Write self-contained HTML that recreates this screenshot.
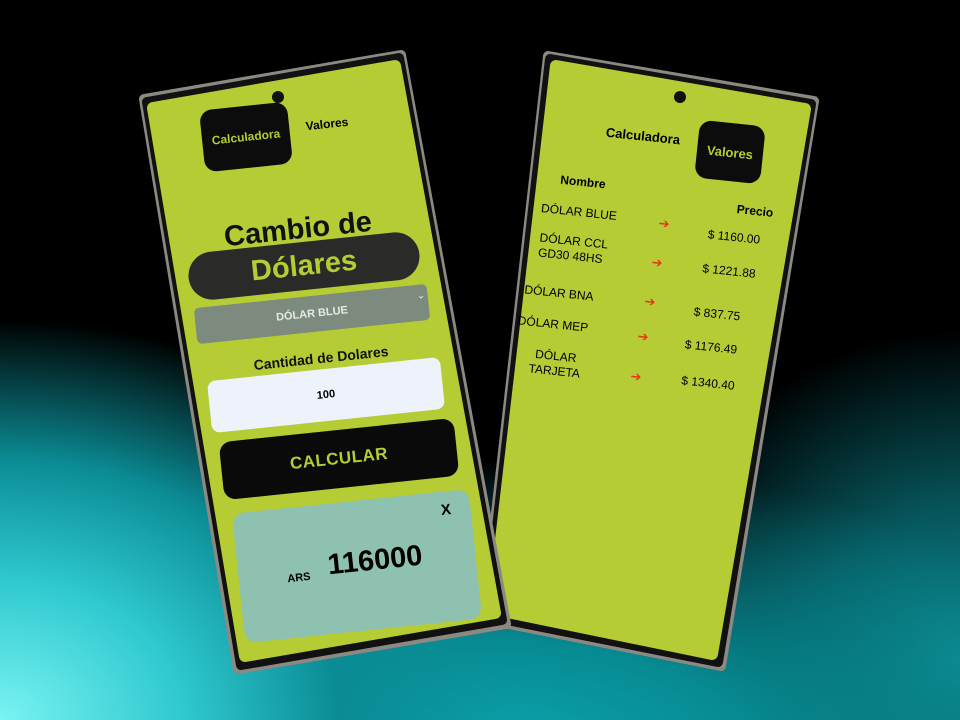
<!DOCTYPE html>
<html><head><meta charset="utf-8"><style>
body{margin:0;width:960px;height:720px;overflow:hidden;position:relative;font-family:"Liberation Sans",sans-serif;
background:
radial-gradient(ellipse 520px 400px at 0px 720px,#7af3f3 0%,#2fc9cf 35%,#0b8c95 65%,rgba(0,40,45,0) 100%),
radial-gradient(ellipse 700px 300px at 480px 760px,#0ca8b0 0%,#078a92 40%,rgba(0,30,35,0) 100%),
radial-gradient(ellipse 330px 330px at 960px 660px,#0d8a90 0%,#06565c 45%,rgba(0,0,0,0) 100%),
#000;}
.e{position:absolute;transform:translate(-50%,-50%) rotate(var(--r));white-space:nowrap;text-align:center;display:flex;align-items:center;justify-content:center}
.L{--r:-6deg}.R{--r:6deg}
svg{position:absolute;left:0;top:0}
</style></head><body>
<svg width="960" height="720">
<polygon points="548,56 814,101 721,666 484,619" fill="#8d8882" stroke="#8d8882" stroke-width="10" stroke-linejoin="round"/>
<polygon points="550,59 811,104 718,662 487,616" fill="#111" stroke="#111" stroke-width="10" stroke-linejoin="round"/>
<polygon points="556,66 805,109 712,654 493,609" fill="#b5cc34" stroke="#b5cc34" stroke-width="12" stroke-linejoin="round"/>
<polygon points="144,99 401,55 506,624 238,669" fill="#8d8882" stroke="#8d8882" stroke-width="10" stroke-linejoin="round"/>
<polygon points="147,102 399,58 502,620 241,665" fill="#111" stroke="#111" stroke-width="10" stroke-linejoin="round"/>
<polygon points="153,108 395,66 495,613 245,656" fill="#b5cc34" stroke="#b5cc34" stroke-width="12" stroke-linejoin="round"/>
<circle cx="278" cy="97" r="6" fill="#111"/>
<circle cx="680" cy="97" r="6" fill="#111"/>
</svg>
<!-- left phone -->
<div class="e L" style="left:246px;top:137px;width:88px;height:62px;background:#0c0c0c;border-radius:12px;color:#b5cc34;font-weight:bold;font-size:12px">Calculadora</div>
<div class="e L" style="left:327px;top:124px;font-weight:bold;font-size:12px">Valores</div>
<div class="e L" style="left:298px;top:230px;font-weight:bold;font-size:29px;color:#111">Cambio de</div>
<div class="e L" style="left:304px;top:266px;width:232px;height:48px;background:#2a2a28;border-radius:24px;color:#b5cc34;font-weight:bold;font-size:29px">Dólares</div>
<div class="e L" style="left:312px;top:314px;width:234px;height:36px;background:#7d8a7e;border-radius:5px;color:#e6eae6;font-size:11px;font-weight:bold">DÓLAR BLUE</div>
<div class="e L" style="left:421px;top:296px;color:#e6eae6;font-size:10px">⌄</div>
<div class="e L" style="left:321px;top:358px;font-weight:bold;font-size:14px;color:#111">Cantidad de Dolares</div>
<div class="e L" style="left:326px;top:395px;width:234px;height:52px;background:#eef2fb;border-radius:8px;font-size:11px;font-weight:bold">100</div>
<div class="e L" style="left:339px;top:459px;width:236px;height:58px;background:#0a0a0a;border-radius:12px;color:#b5cc34;font-weight:900;font-size:17px;letter-spacing:0.5px">CALCULAR</div>
<div class="e L" style="left:357px;top:566px;width:238px;height:130px;background:#8fc1b0;border-radius:12px"></div>
<div class="e L" style="left:446px;top:510px;font-weight:bold;font-size:15px">X</div>
<div class="e L" style="left:299px;top:578px;font-weight:bold;font-size:11px">ARS</div>
<div class="e L" style="left:375px;top:561px;font-weight:bold;font-size:29px">116000</div>
<!-- right phone -->
<div class="e R" style="left:643px;top:136px;font-weight:bold;font-size:13px">Calculadora</div>
<div class="e R" style="left:730px;top:152px;width:66px;height:58px;background:#0c0c0c;border-radius:12px;color:#b5cc34;font-weight:bold;font-size:13px">Valores</div>
<div class="e R" style="left:583px;top:182px;font-weight:bold;font-size:12px">Nombre</div>
<div class="e R" style="left:755px;top:211px;font-weight:bold;font-size:12px">Precio</div>
<div class="e R" style="left:579px;top:212px;font-size:12px">DÓLAR BLUE</div>
<div class="e R" style="left:573px;top:249px;font-size:12px;line-height:15px;text-align:left;display:block">DÓLAR CCL<br>GD30 48HS</div>
<div class="e R" style="left:559px;top:293px;font-size:12px">DÓLAR BNA</div>
<div class="e R" style="left:553px;top:324px;font-size:12px">DÓLAR MEP</div>
<div class="e R" style="left:555px;top:364px;font-size:12px;line-height:15px;display:block">DÓLAR<br>TARJETA</div>
<div class="e R" style="left:664px;top:224px;color:#e8341c;font-size:13px">➔</div>
<div class="e R" style="left:657px;top:263px;color:#e8341c;font-size:13px">➔</div>
<div class="e R" style="left:650px;top:302px;color:#e8341c;font-size:13px">➔</div>
<div class="e R" style="left:643px;top:337px;color:#e8341c;font-size:13px">➔</div>
<div class="e R" style="left:636px;top:377px;color:#e8341c;font-size:13px">➔</div>
<div class="e R" style="left:734px;top:237px;font-size:12px">$ 1160.00</div>
<div class="e R" style="left:729px;top:271px;font-size:12px">$ 1221.88</div>
<div class="e R" style="left:717px;top:314px;font-size:12px">$ 837.75</div>
<div class="e R" style="left:711px;top:347px;font-size:12px">$ 1176.49</div>
<div class="e R" style="left:708px;top:383px;font-size:12px">$ 1340.40</div>
</body></html>
